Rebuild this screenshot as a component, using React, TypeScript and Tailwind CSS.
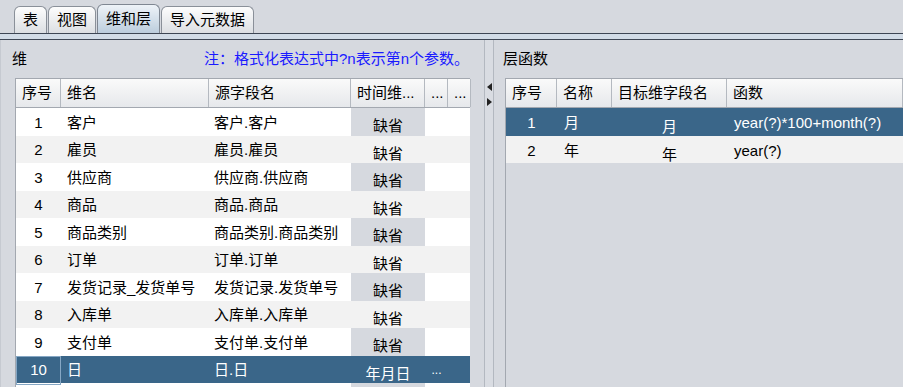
import React from "react";

const dims = [
  ["客户", "客户.客户"],
  ["雇员", "雇员.雇员"],
  ["供应商", "供应商.供应商"],
  ["商品", "商品.商品"],
  ["商品类别", "商品类别.商品类别"],
  ["订单", "订单.订单"],
  ["发货记录_发货单号", "发货记录.发货单号"],
  ["入库单", "入库单.入库单"],
  ["支付单", "支付单.支付单"],
  ["日", "日.日"],
];

const levels = [
  ["月", "月", "year(?)*100+month(?)"],
  ["年", "年", "year(?)"],
];

const tabs = ["表", "视图", "维和层", "导入元数据"];

const headCell = "flex items-center border-r border-[#b4b9c0] pl-[6px] whitespace-nowrap overflow-hidden";

function Tab({ label, active }: { label: string; active: boolean }) {
  return (
    <div
      className={
        active
          ? "flex h-[29px] items-center rounded-t-[6px] border border-b-0 border-[#7f8792] bg-gradient-to-b from-[#eef3f8] to-[#bccddd] px-[8px]"
          : "flex h-[27px] items-center rounded-t-[6px] border border-b-0 border-[#8a9099] bg-gradient-to-b from-[#fdfdfd] to-[#dcdfe3] px-[8px]"
      }
    >
      {label}
    </div>
  );
}

export default function App() {
  return (
    <div className="flex h-[387px] w-[903px] flex-col overflow-hidden bg-[#d6d9df] font-['Liberation_Sans','Noto_Sans_CJK_SC',sans-serif] text-[15px] text-black">
      {/* tab strip */}
      <div className="flex h-[33px] shrink-0 items-end gap-[1px] pl-[14px]">
        {tabs.map((t) => (
          <Tab key={t} label={t} active={t === "维和层"} />
        ))}
      </div>
      <div className="h-[7px] shrink-0 border-y border-[#3d4654] bg-[#d2dce7]" />

      <div className="flex min-h-0 flex-1 overflow-hidden">
        {/* left: dimensions */}
        <div className="flex w-[484px] flex-col border-l border-[#c6cad1] pl-[14px] pr-[14px]">
          <div className="flex h-[38px] shrink-0 items-center justify-between">
            <span className="-ml-[3px]">维</span>
            <span className="pr-[1px] text-[#1a1aff]">注：格式化表达式中?n表示第n个参数。</span>
          </div>
          <div className="flex flex-1 flex-col border-l border-t border-[#a3a8b0] bg-white">
            <div className="grid h-[29px] shrink-0 grid-cols-[45px_148px_142px_74px_23px_23px] border-b border-[#a3a8b0] bg-gradient-to-b from-[#fafafa] to-[#e6e8eb]">
              <div className={headCell}>序号</div>
              <div className={headCell}>维名</div>
              <div className={headCell}>源字段名</div>
              <div className={headCell}>时间维...</div>
              <div className={headCell}>...</div>
              <div className={headCell}>...</div>
            </div>
            {dims.map(([name, src], i) => {
              const sel = i === dims.length - 1;
              const odd = i % 2 === 0;
              return (
                <div
                  key={i}
                  className={
                    "grid h-[27.5px] shrink-0 grid-cols-[45px_148px_142px_74px_23px_23px] " +
                    (sel ? "bg-[#3a6689] text-white" : odd ? "bg-white" : "bg-[#f2f2f2]")
                  }
                >
                  <div className={"flex items-center justify-center " + (sel ? "border border-[#86a7c4]" : "")}>
                    {i + 1}
                  </div>
                  <div className="flex items-center pl-[6px] whitespace-nowrap">{name}</div>
                  <div className="flex items-center pl-[5px] whitespace-nowrap">{src}</div>
                  <div
                    className={
                      "flex items-center justify-center pt-[7px] " +
                      (sel ? "" : odd ? "bg-[#d6d9df]" : "")
                    }
                  >
                    {sel ? "年月日" : "缺省"}
                  </div>
                  <div className="flex items-center justify-center text-[12px]">{sel ? "..." : ""}</div>
                  <div />
                </div>
              );
            })}
            <div className="grid h-[10px] shrink-0 grid-cols-[45px_148px_142px_74px_23px_23px]">
              <div />
              <div />
              <div />
              <div className="bg-[#d6d9df]" />
            </div>
          </div>
        </div>

        {/* splitter */}
        <div className="flex w-[10px] flex-col items-center border-x border-[#b3b8c0] bg-[#d9dce2] pt-[43px]">
          <svg width="5" height="8" viewBox="0 0 5 8">
            <path d="M5 0 L0 4 L5 8 Z" fill="#222" />
          </svg>
          <svg className="mt-[7px]" width="5" height="8" viewBox="0 0 5 8">
            <path d="M0 0 L5 4 L0 8 Z" fill="#222" />
          </svg>
        </div>

        {/* right: level functions */}
        <div className="flex flex-1 flex-col pl-[11px]">
          <div className="flex h-[38px] shrink-0 items-center">
            <span className="-ml-[2px]">层函数</span>
          </div>
          <div className="flex flex-1 flex-col border-l border-t border-[#a3a8b0]">
            <div className="grid h-[29px] shrink-0 grid-cols-[51px_55px_115px_1fr] border-b border-[#a3a8b0] bg-gradient-to-b from-[#fafafa] to-[#e6e8eb]">
              <div className={headCell}>序号</div>
              <div className={headCell}>名称</div>
              <div className={headCell}>目标维字段名</div>
              <div className={headCell}>函数</div>
            </div>
            {levels.map(([name, target, fn], i) => {
              const sel = i === 0;
              return (
                <div
                  key={i}
                  className={
                    "grid h-[27.5px] shrink-0 grid-cols-[51px_55px_115px_1fr] " +
                    (sel ? "bg-[#3a6689] text-white" : "bg-[#f2f2f2]")
                  }
                >
                  <div className="flex items-center justify-center">{i + 1}</div>
                  <div className="flex items-center pl-[7px]">{name}</div>
                  <div className="flex items-center justify-center pt-[8px]">{target}</div>
                  <div className="flex items-center pl-[7px] whitespace-nowrap">{fn}</div>
                </div>
              );
            })}
          </div>
        </div>
      </div>
    </div>
  );
}
